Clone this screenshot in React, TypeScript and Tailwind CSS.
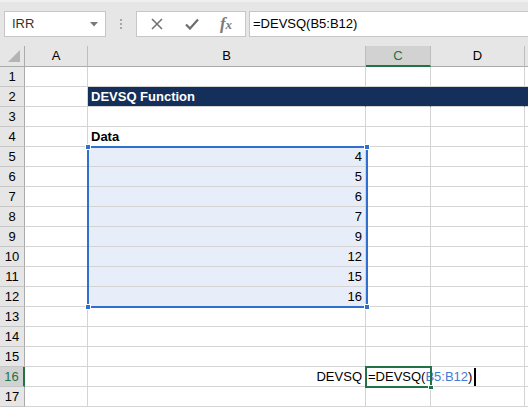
import React from "react";

const F = { fontFamily: '"Liberation Sans", Arial, sans-serif' };

const data: Record<number, string> = { 5: "4", 6: "5", 7: "6", 8: "7", 9: "9", 10: "12", 11: "15", 12: "16" };

function Cell({ children, className = "" }: { children?: React.ReactNode; className?: string }) {
  return (
    <div className={`h-[20px] border-r border-b border-[#d4d4d4] flex items-end pb-[1px] text-[13px] leading-[16px] text-black ${className}`}>
      {children}
    </div>
  );
}

export default function App() {
  const rows = Array.from({ length: 17 }, (_, i) => i + 1);
  return (
    <div className="w-[528px] h-[410px] overflow-hidden bg-white relative" style={F}>
      {/* toolbar */}
      <div className="h-[46px] bg-[#e6e6e6] border-t-[2px] border-[#f0f0f0] flex items-start pt-[9px]">
        <div className="ml-[4px] w-[102px] h-[26px] bg-white border border-[#c6c6c6] flex items-center pl-[7px] pr-[7px] text-[13px] text-[#333]">
          <span className="flex-1">IRR</span>
          <svg width="8" height="5" viewBox="0 0 8 5"><polygon points="0,0 8,0 4,4.5" fill="#7a7a7a" /></svg>
        </div>
        <div className="w-[30px] h-[26px] flex flex-col items-center justify-center gap-[2px]">
          <div className="w-[2px] h-[2px] bg-[#a8a8a8]" />
          <div className="w-[2px] h-[2px] bg-[#a8a8a8]" />
          <div className="w-[2px] h-[2px] bg-[#a8a8a8]" />
        </div>
        <div className="w-[110px] h-[26px] bg-white border border-[#c6c6c6] flex items-center">
          <div className="w-[36px] flex justify-center ml-[2px]">
            <svg width="12" height="12" viewBox="0 0 12 12"><path d="M1 1 L11 11 M11 1 L1 11" stroke="#6e6e6e" strokeWidth="1.5" /></svg>
          </div>
          <div className="w-[34px] flex justify-center">
            <svg width="14" height="12" viewBox="0 0 14 12"><path d="M1 6.5 L5 10.5 L13 1.5" stroke="#6e6e6e" strokeWidth="2.2" fill="none" /></svg>
          </div>
          <div className="w-[34px] flex justify-center items-baseline text-[17px] leading-[20px] italic font-bold text-[#7a7a7a]" style={{ fontFamily: '"Liberation Serif", serif' }}>
            f<span className="text-[13px]">x</span>
          </div>
        </div>
        <div className="ml-[3px] flex-1 h-[26px] bg-white border-y border-l border-[#c6c6c6] flex items-center pl-[3px] text-[13px] text-black">
          =DEVSQ(B5:B12)
        </div>
      </div>

      {/* grid */}
      <div className="grid grid-cols-[25px_63px_278px_65px_94px_3px]">
        {/* header row */}
        <div className="h-[21px] bg-[#e6e6e6] border-r border-b border-[#ababab] flex items-end justify-end p-[4px]">
          <svg width="12" height="12" viewBox="0 0 12 12"><polygon points="12,0 12,12 0,12" fill="#b4b4b4" /></svg>
        </div>
        <div className="h-[21px] bg-[#e6e6e6] border-r border-b border-[#bdbdbd] border-b-[#ababab] flex items-center justify-center text-[13px] text-black">A</div>
        <div className="h-[21px] bg-[#e6e6e6] border-r border-b border-[#bdbdbd] border-b-[#ababab] flex items-center justify-center text-[13px] text-black">B</div>
        <div className="h-[21px] bg-[#d2d2d2] border-r border-[#bdbdbd] border-b-2 border-b-[#217346] flex items-center justify-center text-[13px] text-[#217346]">C</div>
        <div className="h-[21px] bg-[#e6e6e6] border-r border-b border-[#bdbdbd] border-b-[#ababab] flex items-center justify-center text-[13px] text-black">D</div>
        <div className="h-[21px] bg-[#e6e6e6] border-b border-[#ababab]" />

        {rows.map((r) => {
          const sel = r === 16;
          const inData = r >= 5 && r <= 12;
          const title = r === 2;
          return (
            <React.Fragment key={r}>
              <div
                className={`h-[20px] border-b border-[#c6c6c6] flex items-center justify-center text-[13px] ${
                  sel ? "bg-[#d2d2d2] text-[#217346] border-r-2 border-r-[#217346]" : "bg-[#e6e6e6] text-black border-r border-r-[#ababab]"
                }`}
              >
                {r}
              </div>
              <Cell />
              <Cell
                className={`${title ? "bg-[#14305a] text-white font-bold pl-[3px] border-r-[#14305a]" : ""} ${inData ? "bg-[#e8eef9] justify-end pr-[3px]" : ""} ${r === 4 ? "font-bold pl-[3px]" : ""} ${r === 16 ? "justify-end pr-[3px]" : ""}`}
              >
                {title && <span className="text-white">DEVSQ Function</span>}
                {r === 4 && "Data"}
                {inData && data[r]}
                {r === 16 && "DEVSQ"}
              </Cell>
              <Cell className={`${title ? "bg-[#14305a] border-r-[#14305a]" : ""} ${r === 16 ? "relative z-10 overflow-visible" : ""}`}>
                {r === 16 && (
                  <span className="whitespace-nowrap pl-[2px] flex items-end">
                    =DEVSQ(<span className="text-[#3f7bd6]">B5:B12</span>)
                    <span className="inline-block w-[2px] h-[18px] bg-black ml-[2px] mb-[-1px]" />
                  </span>
                )}
              </Cell>
              <Cell className={title ? "bg-[#14305a] border-r-[#14305a]" : ""} />
              <div className={`h-[20px] border-b border-[#d4d4d4] ${title ? "bg-[#14305a]" : ""}`} />
            </React.Fragment>
          );
        })}
      </div>

      {/* selection overlay B5:B12 */}
      <div className="absolute left-[87px] top-[146px] w-[281px] h-[162px] border-2 border-[#2f6fcf] pointer-events-none">
        <div className="absolute -left-[4px] -top-[4px] w-[6px] h-[6px] bg-[#2f6fcf] border border-white" />
        <div className="absolute -right-[4px] -top-[4px] w-[6px] h-[6px] bg-[#2f6fcf] border border-white" />
        <div className="absolute -left-[4px] -bottom-[4px] w-[6px] h-[6px] bg-[#2f6fcf] border border-white" />
        <div className="absolute -right-[4px] -bottom-[4px] w-[6px] h-[6px] bg-[#2f6fcf] border border-white" />
      </div>

      {/* active cell C16 */}
      <div className="absolute left-[365px] top-[366px] w-[67px] h-[22px] border-2 border-[#217346] pointer-events-none z-20">
        <div className="absolute -right-[4px] -bottom-[4px] w-[6px] h-[5px] bg-[#217346] border border-white" />
      </div>
    </div>
  );
}
